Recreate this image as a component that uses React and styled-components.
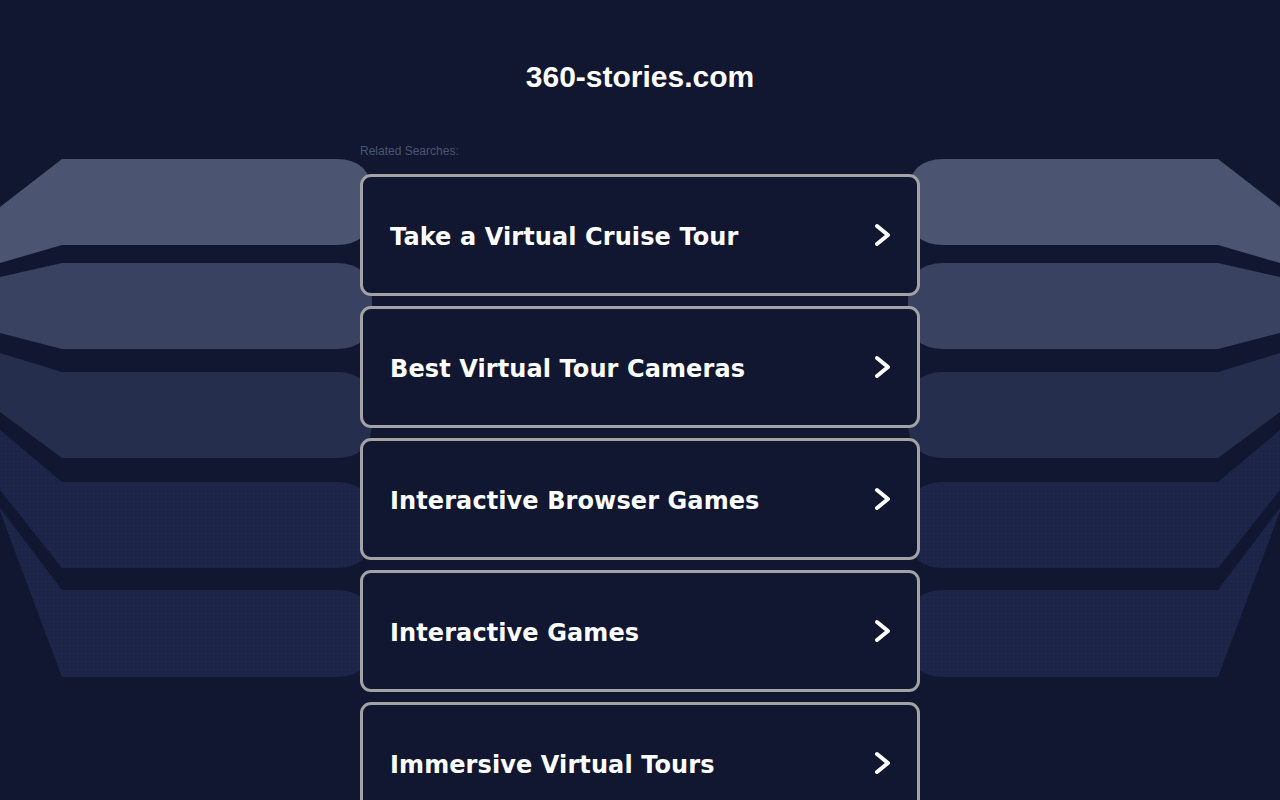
import React from "react";
import styled, { createGlobalStyle } from "styled-components";

const GlobalStyle = createGlobalStyle`
  html, body {
    margin: 0;
    padding: 0;
    background: #111730;
  }
  body {
    font-family: "Liberation Sans", Arial, sans-serif;
    overflow: hidden;
  }
`;

const Page = styled.div`
  position: relative;
  min-height: 800px;
  background: #111730;
`;

const Backdrop = styled.svg`
  position: absolute;
  top: 0;
  left: 0;
  width: 1280px;
  height: 800px;
  z-index: 0;
  pointer-events: none;
`;

const Column = styled.main`
  position: relative;
  z-index: 1;
  width: 560px;
  margin: 0 auto;
  display: flex;
  flex-direction: column;
`;

const Title = styled.h1`
  margin: 60px 0 0;
  font-family: "Liberation Sans", Arial, sans-serif;
  font-weight: 700;
  font-size: 30px;
  line-height: 34px;
  color: #ffffff;
  text-align: center;
`;

const Label = styled.div`
  margin-top: 50px;
  font-size: 12px;
  line-height: 14px;
  color: #4b5574;
`;

const List = styled.div`
  margin-top: 16px;
  display: flex;
  flex-direction: column;
  gap: 10px;
`;

const Card = styled.a`
  box-sizing: border-box;
  height: 122px;
  display: flex;
  align-items: center;
  justify-content: space-between;
  padding: 3px 26px 0 27px;
  border: 3px solid #a3a3a5;
  border-radius: 11px;
  background: #111730;
  color: #ffffff;
  text-decoration: none;
  cursor: pointer;
`;

const CardText = styled.span`
  font-family: "DejaVu Sans", Verdana, sans-serif;
  font-weight: 700;
  font-size: 24px;
  letter-spacing: 0.1px;
  line-height: 28px;
  color: #ffffff;
`;

const ChevronIcon = styled.svg`
  display: block;
  margin-top: -4px;
  flex: none;
`;

const Chevron = () => (
  <ChevronIcon width="17" height="24" viewBox="0 0 17 24">
    <polyline
      points="3,3 14,12 3,21"
      fill="none"
      stroke="#ffffff"
      strokeWidth="4"
      strokeLinecap="round"
      strokeLinejoin="round"
    />
  </ChevronIcon>
);

const bands = [
  { top: 159, bottom: 245, lt: 207, lb: 263, fill: "#4b5572" },
  { top: 263, bottom: 349, lt: 277, lb: 333, fill: "#3a4261" },
  { top: 372, bottom: 458, lt: 353, lb: 412, fill: "#262e4d" },
  { top: 482, bottom: 568, lt: 430, lb: 490, fill: "url(#dots)" },
  { top: 590, bottom: 677, lt: 508, lb: 511, fill: "url(#dots)" },
];

const R = 36;
const leftPath = ({ top, bottom, lt, lb }) =>
  `M0 ${lt} L62 ${top} L${372 - R} ${top} Q372 ${top} 372 ${top + R} L372 ${bottom - R} Q372 ${bottom} ${372 - R} ${bottom} L62 ${bottom} L0 ${lb} Z`;
const rightPath = ({ top, bottom, lt, lb }) =>
  `M1280 ${lt} L1218 ${top} L${908 + R} ${top} Q908 ${top} 908 ${top + R} L908 ${bottom - R} Q908 ${bottom} ${908 + R} ${bottom} L1218 ${bottom} L1280 ${lb} Z`;

const items = [
  "Take a Virtual Cruise Tour",
  "Best Virtual Tour Cameras",
  "Interactive Browser Games",
  "Interactive Games",
  "Immersive Virtual Tours",
];

export default function App() {
  return (
    <Page>
      <GlobalStyle />
      <Backdrop viewBox="0 0 1280 800" aria-hidden="true">
        <defs>
          <pattern id="dots" width="4" height="4" patternUnits="userSpaceOnUse">
            <rect width="4" height="4" fill="#1c2547" />
            <rect x="1" y="1" width="1" height="1" fill="#242e53" />
          </pattern>
        </defs>
        {bands.map((b, i) => (
          <g key={i}>
            <path d={leftPath(b)} fill={b.fill} />
            <path d={rightPath(b)} fill={b.fill} />
          </g>
        ))}
      </Backdrop>
      <Column>
        <Title>360-stories.com</Title>
        <Label>Related Searches:</Label>
        <List>
          {items.map((t) => (
            <Card key={t}>
              <CardText>{t}</CardText>
              <Chevron />
            </Card>
          ))}
        </List>
      </Column>
    </Page>
  );
}
